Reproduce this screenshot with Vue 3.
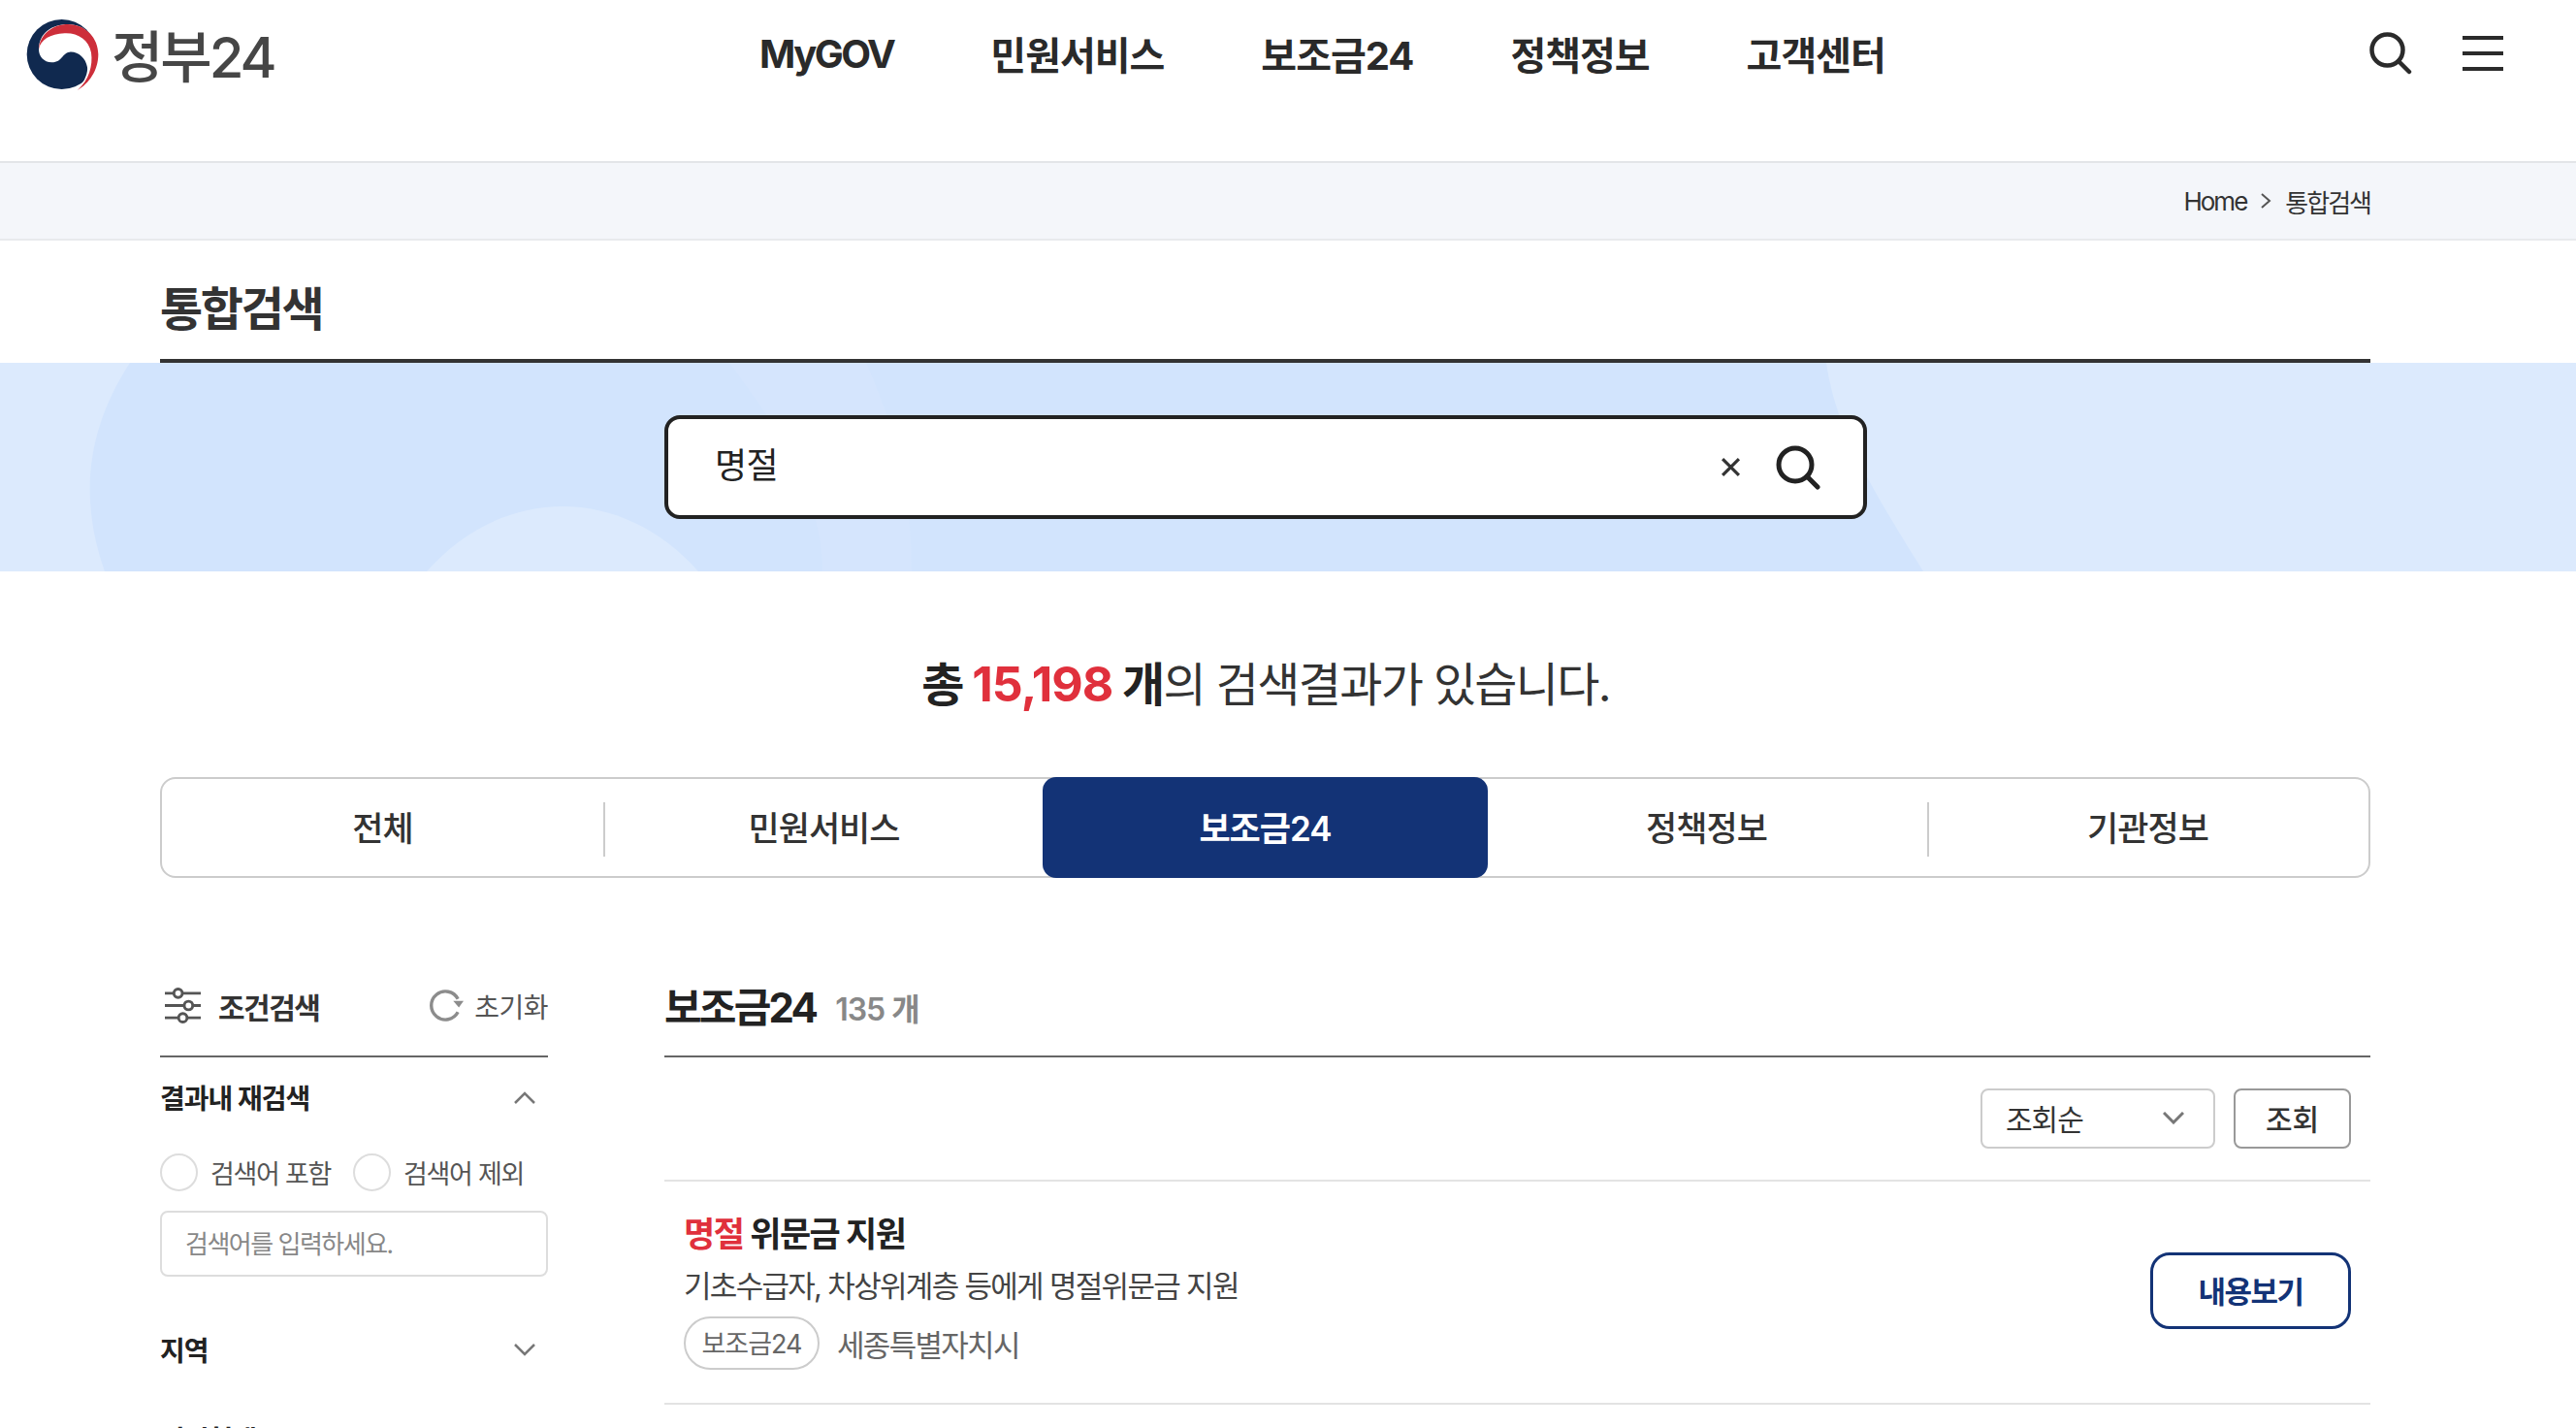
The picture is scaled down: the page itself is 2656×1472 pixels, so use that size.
<template>
  <div class="page">
    <header class="top">
      <a class="logo">
        <svg class="mark" viewBox="0 0 264 264">
          <circle cx="131" cy="135" r="108" fill="#10294f" />
          <path d="M60 120C60 70 100 42 150 42C205 42 242 85 242 135C242 185 215 225 180 246C205 215 212 190 210 175C205 145 180 125 155 128C130 132 135 158 100 160C75 160 60 140 60 120Z" fill="#fff" />
          <path d="M60 120C62 72 105 42 150 42C205 42 244 85 244 135C244 185 215 225 180 246C215 215 228 170 222 130C215 90 180 68 140 70C95 72 65 90 60 120Z" fill="#cd2e3a" />
        </svg>
        <span>정부24</span>
      </a>
      <nav class="gnb">
        <a v-for="item in menus" :key="item">{{ item }}</a>
      </nav>
      <div class="top-icons">
        <svg class="top-search" viewBox="0 0 44 44" fill="none" stroke="#2b2b2b" stroke-width="4.500" stroke-linecap="round">
          <circle cx="18.500" cy="18.500" r="16" />
          <path d="M30 30L41 41" />
        </svg>
        <svg class="top-menu" viewBox="0 0 42 38" fill="none" stroke="#2b2b2b" stroke-width="4">
          <path d="M0 3H42M0 19H42M0 35H42" />
        </svg>
      </div>
    </header>

    <div class="crumb">
      <div class="crumb-in">
        <span>Home</span>
        <svg class="crumb-arrow" viewBox="0 0 12 18" fill="none" stroke="#555" stroke-width="2"><path d="M2 2L10 9L2 16" /></svg>
        <span>통합검색</span>
      </div>
    </div>

    <div class="title-wrap">
      <h1>통합검색</h1>
    </div>

    <section class="hero">
      <svg class="hero-bg" viewBox="0 0 2656 215" preserveAspectRatio="none">
        <rect width="2656" height="215" fill="#d2e4fd" />
        <path d="M0 0H134C95 60 78 130 108 215H0Z" fill="#dceafd" />
        <path d="M1883 0H2656V215H1983C1930 130 1893 70 1883 0Z" fill="#dceafd" />
        <path d="M440 215C480 170 530 148 580 148C630 148 680 170 720 215Z" fill="#dceafd" />
        <path d="M752 0H893C925 70 940 140 940 215H848C848 140 805 70 752 0Z" fill="#d5e5fd" />
      </svg>
      <div class="search-box">
        <span class="search-text">명절</span>
        <svg class="clear" viewBox="0 0 20 20" fill="none" stroke="#333" stroke-width="3"><path d="M2 2L18 18M18 2L2 18" /></svg>
        <svg class="search-btn" viewBox="0 0 46 46" fill="none" stroke="#222" stroke-width="5" stroke-linecap="round">
          <circle cx="20" cy="20" r="17" />
          <path d="M32 32L43 43" />
        </svg>
      </div>
    </section>

    <p class="total"><b>총 <em>15,198</em> 개</b>의 검색결과가 있습니다.</p>

    <div class="tabs">
      <a v-for="tab in tabs" :key="tab" class="tab" :class="{ on: tab === '보조금24' }">{{ tab }}</a>
    </div>

    <div class="body">
      <aside class="side">
        <div class="side-head">
          <div class="side-title">
            <svg class="filter" viewBox="0 0 38 38" fill="none" stroke="#555" stroke-width="3">
              <path d="M0 6H9M19 6H38M0 19H20M30 19H38M0 32H14M24 32H38" />
              <circle cx="14" cy="6" r="4.500" />
              <circle cx="25" cy="19" r="4.500" />
              <circle cx="19" cy="32" r="4.500" />
            </svg>
            <span>조건검색</span>
          </div>
          <div class="reset">
            <svg viewBox="0 0 36 34" fill="none">
              <path d="M30 10A15 15 0 1 0 30 24" stroke="#8c8c8c" stroke-width="3.500" />
              <path d="M25 12H36L31 19Z" fill="#8c8c8c" />
            </svg>
            <span>초기화</span>
          </div>
        </div>

        <div class="group-head first">
          <strong>결과내 재검색</strong>
          <svg class="chev" viewBox="0 0 22 13" fill="none" stroke="#777" stroke-width="2.500"><path d="M1 12L11 2L21 12" /></svg>
        </div>
        <div class="radios">
          <label><i></i>검색어 포함</label>
          <label><i></i>검색어 제외</label>
        </div>
        <div class="side-input">검색어를 입력하세요.</div>

        <div class="group-head region">
          <strong>지역</strong>
          <svg class="chev" viewBox="0 0 22 13" fill="none" stroke="#777" stroke-width="2.500"><path d="M1 1L11 11L21 1" /></svg>
        </div>
        <div class="group-head support">
          <strong>지원형태</strong>
        </div>
      </aside>

      <main class="main">
        <div class="main-head">
          <h2>보조금24</h2>
          <span>135 개</span>
        </div>
        <div class="sort-row">
          <div class="select">
            <span>조회순</span>
            <svg class="chev" viewBox="0 0 22 13" fill="none" stroke="#777" stroke-width="3"><path d="M1 1L11 11L21 1" /></svg>
          </div>
          <button class="look">조회</button>
        </div>
        <article v-for="row in results" :key="row.name" class="result">
          <div class="result-info">
            <h3><em>{{ row.keyword }}</em> {{ row.name }}</h3>
            <p>{{ row.desc }}</p>
            <div class="result-meta">
              <span class="tag">{{ row.tag }}</span>
              <span class="place">{{ row.place }}</span>
            </div>
          </div>
          <button class="detail">내용보기</button>
        </article>
      </main>
    </div>
  </div>
</template>

<script setup>
const menus = ['MyGOV', '민원서비스', '보조금24', '정책정보', '고객센터']
const tabs = ['전체', '민원서비스', '보조금24', '정책정보', '기관정보']
const results = [
  {
    keyword: '명절',
    name: '위문금 지원',
    desc: '기초수급자, 차상위계층 등에게 명절위문금 지원',
    tag: '보조금24',
    place: '세종특별자치시'
  }
]
</script>

<style>
html,
body {
  margin: 0;
  height: 1472px;
  overflow: hidden;
  background: #fff;
}
</style>

<style scoped>
.page {
  font-family: Inter, "Noto Sans CJK KR", sans-serif;
  color: #222;
  width: 2656px;
}

.top {
  display: flex;
  align-items: flex-start;
  height: 168px;
  box-sizing: border-box;
  padding: 18px 75px 0 27px;
  border-bottom: 2px solid #e3e5e8;
}

.logo {
  display: flex;
  align-items: center;
  width: 756px;
  height: 74px;
  font-size: 58px;
  font-weight: 500;
  color: #464646;
  letter-spacing: -3px;
}

.mark {
  width: 88px;
  height: 88px;
  flex: none;
  margin: 0 0 0 -7px;
}

.logo span {
  margin-left: 7px;
}

.gnb {
  display: flex;
  gap: 100px;
  height: 74px;
  align-items: center;
  font-size: 40px;
  font-weight: 700;
  letter-spacing: -1px;
  color: #2a2a2a;
}

.gnb a:first-child {
  letter-spacing: -2.500px;
}

.top-icons {
  margin-left: auto;
  display: flex;
  gap: 52px;
  height: 74px;
  align-items: center;
}

.top-search {
  width: 44px;
  height: 44px;
}

.top-menu {
  width: 42px;
  height: 38px;
}

.crumb {
  height: 80px;
  box-sizing: border-box;
  background: #f4f6fa;
  border-bottom: 2px solid #e8eaed;
}

.crumb-in {
  width: 2279px;
  margin: 0 auto 0 165px;
  height: 100%;
  display: flex;
  justify-content: flex-end;
  align-items: center;
  gap: 14px;
  font-size: 26px;
  letter-spacing: -2px;
  color: #333;
}

.crumb-arrow {
  width: 12px;
  height: 18px;
}

.title-wrap {
  width: 2279px;
  margin-left: 165px;
  height: 126px;
  box-sizing: border-box;
  padding-bottom: 27px;
  border-bottom: 4px solid #333;
  display: flex;
  align-items: flex-end;
}

h1 {
  margin: 0;
  font-size: 48px;
  line-height: 1;
  font-weight: 700;
  letter-spacing: -2.300px;
  color: #333;
}

.hero {
  position: relative;
  height: 215px;
  display: flex;
  justify-content: center;
  align-items: center;
  padding-right: 46px;
  box-sizing: border-box;
  overflow: hidden;
}

.hero-bg {
  position: absolute;
  left: 0;
  top: 0;
  width: 100%;
  height: 100%;
}

.search-box {
  position: relative;
  width: 1240px;
  height: 107px;
  box-sizing: border-box;
  background: #fff;
  border: 4px solid #222;
  border-radius: 16px;
  display: flex;
  align-items: center;
  padding: 0 44px 0 48px;
}

.search-text {
  font-size: 36px;
  line-height: 44px;
  padding-bottom: 3px;
  letter-spacing: -0.500px;
  color: #222;
  flex: 1;
}

.clear {
  width: 21px;
  height: 21px;
  margin-right: 36px;
}

.search-btn {
  width: 46px;
  height: 46px;
}

.total {
  margin: 85px 0 0;
  height: 62px;
  line-height: 62px;
  text-align: center;
  font-size: 48px;
  letter-spacing: -1.700px;
  color: #333;
  padding-right: 46px;
}

.total b {
  font-weight: 700;
  color: #222;
}

.total em {
  font-style: normal;
  font-size: 50px;
  letter-spacing: -1px;
  color: #e0303c;
}

.tabs {
  width: 2279px;
  height: 104px;
  margin: 65px 0 0 165px;
  box-sizing: border-box;
  border: 2px solid #ccc;
  border-radius: 16px;
  display: grid;
  grid-template-columns: repeat(5, 1fr);
  align-items: center;
}

.tab {
  position: relative;
  height: 100%;
  box-sizing: border-box;
  padding-bottom: 4px;
  display: flex;
  align-items: center;
  justify-content: center;
  font-size: 35px;
  font-weight: 500;
  letter-spacing: -1px;
  color: #333;
}

.tab:first-child::after,
.tab:nth-child(4)::after {
  content: "";
  position: absolute;
  right: -2px;
  top: 24px;
  height: 56px;
  width: 2px;
  background: #ccc;
}

.tab.on {
  background: #133376;
  color: #fff;
  font-weight: 600;
  border-radius: 14px;
  height: calc(100% + 4px);
  margin: -2px;
}

.body {
  display: flex;
  margin: 100px 0 0 165px;
  width: 2279px;
  gap: 120px;
}

.side {
  width: 400px;
  flex: none;
}

.side-head {
  height: 85px;
  box-sizing: border-box;
  padding-bottom: 20px;
  border-bottom: 2px solid #666;
  display: flex;
  justify-content: space-between;
  align-items: center;
}

.side-title {
  display: flex;
  align-items: center;
  gap: 18px;
  font-size: 30px;
  font-weight: 700;
  letter-spacing: -1.500px;
  color: #333;
  padding-left: 5px;
}

.filter {
  width: 37px;
  height: 37px;
}

.reset {
  display: flex;
  align-items: center;
  gap: 11px;
  font-size: 28px;
  letter-spacing: -0.500px;
  color: #555;
}

.reset svg {
  width: 35px;
  height: 33px;
}

.group-head {
  display: flex;
  justify-content: space-between;
  align-items: center;
  font-size: 28px;
  letter-spacing: -1px;
  padding-right: 13px;
}

.group-head strong {
  font-weight: 700;
}

.group-head.first {
  height: 40px;
  margin-top: 21px;
}

.group-head.region {
  height: 40px;
  margin-top: 55px;
}

.group-head.support {
  height: 40px;
  margin-top: 52px;
}

.chev {
  width: 22px;
  height: 13px;
}

.radios {
  display: flex;
  gap: 23px;
  margin-top: 38px;
  font-size: 27px;
  letter-spacing: -1.300px;
  color: #555;
}

.radios label {
  display: flex;
  align-items: center;
  gap: 13px;
}

.radios i {
  width: 39px;
  height: 39px;
  box-sizing: border-box;
  border: 2px solid #ddd;
  border-radius: 50%;
}

.side-input {
  margin-top: 20px;
  height: 68px;
  box-sizing: border-box;
  border: 2px solid #ddd;
  border-radius: 8px;
  display: flex;
  align-items: center;
  padding: 0 0 3px 24px;
  font-size: 26px;
  letter-spacing: -1.500px;
  color: #888;
}

.main {
  flex: 1;
}

.main-head {
  height: 85px;
  box-sizing: border-box;
  padding-bottom: 22px;
  border-bottom: 2px solid #666;
  display: flex;
  align-items: center;
  gap: 20px;
}

h2 {
  margin: 0;
  font-size: 42px;
  font-weight: 700;
  letter-spacing: -2.800px;
  color: #222;
}

.main-head span {
  font-size: 32px;
  font-weight: 600;
  letter-spacing: -1px;
  color: #888;
  padding-top: 4px;
}

.sort-row {
  height: 128px;
  box-sizing: border-box;
  border-bottom: 2px solid #e3e3e3;
  display: flex;
  justify-content: flex-end;
  align-items: center;
  gap: 19px;
  padding-right: 20px;
}

.select {
  width: 242px;
  height: 62px;
  box-sizing: border-box;
  border: 2px solid #ccc;
  border-radius: 8px;
  display: flex;
  align-items: center;
  justify-content: space-between;
  padding: 0 30px 2px 24px;
  font-size: 30px;
  letter-spacing: -1px;
  color: #333;
}

.look {
  width: 121px;
  height: 62px;
  box-sizing: border-box;
  background: #fff;
  border: 2px solid #999;
  border-radius: 8px;
  font: inherit;
  font-size: 30px;
  font-weight: 500;
  padding-bottom: 4px;
  color: #333;
}

.result {
  height: 230px;
  box-sizing: border-box;
  border-bottom: 2px solid #e3e3e3;
  display: flex;
  justify-content: space-between;
  align-items: center;
  padding: 0 20px 3px;
}

h3 {
  margin: 0;
  font-size: 35px;
  line-height: 46px;
  font-weight: 700;
  letter-spacing: -1.500px;
  color: #222;
}

h3 em {
  font-style: normal;
  color: #e0303c;
}

.result-info p {
  margin: 9px 0 0;
  font-size: 31px;
  line-height: 44px;
  letter-spacing: -1.700px;
  color: #444;
}

.result-meta {
  display: flex;
  align-items: center;
  gap: 18px;
  margin-top: 9px;
}

.tag {
  width: 140px;
  height: 55px;
  box-sizing: border-box;
  border: 2px solid #ccc;
  border-radius: 28px;
  display: flex;
  align-items: center;
  justify-content: center;
  padding-bottom: 2px;
  font-size: 27px;
  letter-spacing: -1px;
  color: #666;
}

.place {
  font-size: 31px;
  letter-spacing: -1.700px;
  color: #666;
}

.detail {
  width: 207px;
  height: 79px;
  box-sizing: border-box;
  background: #fff;
  border: 3px solid #133376;
  border-radius: 20px;
  font: inherit;
  font-size: 31px;
  font-weight: 600;
  padding-bottom: 4px;
  letter-spacing: -1.500px;
  color: #133376;
}
</style>
